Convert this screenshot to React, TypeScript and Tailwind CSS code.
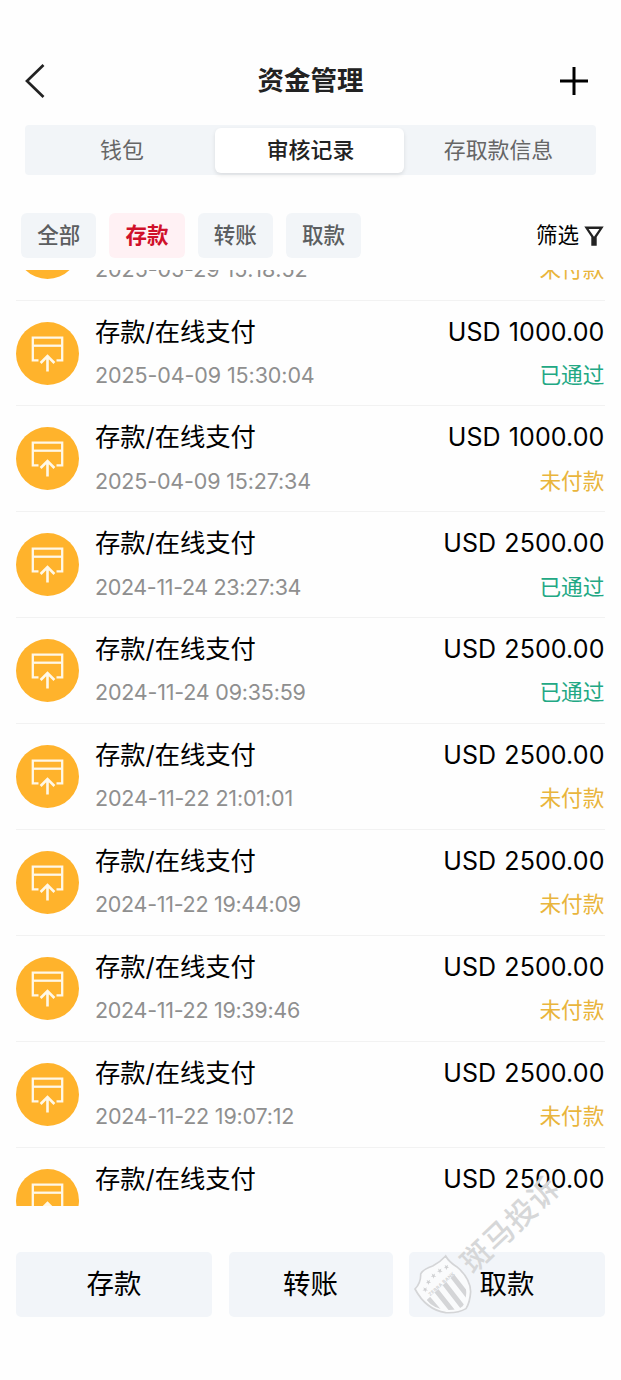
import React from 'react';

type Status = 'paid' | 'unpaid';
interface Entry { date: string; amount: string; status: Status; track: string }

const entries: Entry[] = [
  { date: '2025-05-29 15:18:52', amount: 'USD 1000.00', status: 'unpaid', track: 'tracking-[-0.05px]' },
  { date: '2025-04-09 15:30:04', amount: 'USD 1000.00', status: 'paid', track: 'tracking-[-0.1px]' },
  { date: '2025-04-09 15:27:34', amount: 'USD 1000.00', status: 'unpaid', track: 'tracking-[-0.16px]' },
  { date: '2024-11-24 23:27:34', amount: 'USD 2500.00', status: 'paid', track: 'tracking-[-0.37px]' },
  { date: '2024-11-24 09:35:59', amount: 'USD 2500.00', status: 'paid', track: 'tracking-[-0.21px]' },
  { date: '2024-11-22 21:01:01', amount: 'USD 2500.00', status: 'unpaid', track: 'tracking-[-0.16px]' },
  { date: '2024-11-22 19:44:09', amount: 'USD 2500.00', status: 'unpaid', track: 'tracking-[-0.29px]' },
  { date: '2024-11-22 19:39:46', amount: 'USD 2500.00', status: 'unpaid', track: 'tracking-[-0.29px]' },
  { date: '2024-11-22 19:07:12', amount: 'USD 2500.00', status: 'unpaid', track: 'tracking-[-0.21px]' },
  { date: '2024-11-22 18:52:30', amount: 'USD 2500.00', status: 'unpaid', track: 'tracking-[-0.29px]' },
];

function DepositIcon() {
  return (
    <svg viewBox="0 0 63 63" className="mt-[21px] size-[63px] shrink-0" fill="none">
      <circle cx="31.5" cy="31.5" r="31.5" fill="#ffb32c" />
      <g stroke="#fff8e8" strokeWidth="2.3">
        <path d="M22.500 38.300H16.800V15.700h29.400v22.600H40.500" />
        <path d="M16.800 23.700h29.400" />
        <path d="M31.500 49.500V34M24.600 41l6.900-7 6.900 7" strokeWidth="2.6" />
      </g>
    </svg>
  );
}

function Row({ entry }: { entry: Entry }) {
  return (
    <li className="flex h-[105.9px] shrink-0 gap-4 border-b border-[#f2f2f2] pr-[0.5px]">
      <DepositIcon />
      <div className="flex grow justify-between pt-[13px]">
        <div>
          <p className="text-[25.3px] leading-[36px] text-black">存款/在线支付</p>
          <p className={`mt-[9.2px] text-[21.5px] leading-[32px] text-[#8f8f8f] ${entry.track}`}>{entry.date}</p>
        </div>
        <div className="text-right">
          <p className="text-[25px] leading-[36px] tracking-[0.1px] text-black [word-spacing:1px]">{entry.amount}</p>
          {entry.status === 'paid' ? (
            <p className="mt-[9.2px] text-[21.7px] leading-[32px] text-[#22a884]">已通过</p>
          ) : (
            <p className="mt-[9.2px] text-[21.7px] leading-[32px] text-[#e9b53c]">未付款</p>
          )}
        </div>
      </div>
    </li>
  );
}

const stars: [number, number][] = [[45, 118], [55, 96], [70, 77], [89, 62], [109, 51]];

function Watermark() {
  return (
    <svg viewBox="0 0 160 160" className="pointer-events-none absolute top-[1170px] left-[410px] size-[160px]" fill="none">
      <defs>
        <clipPath id="shieldField">
          <path d="M50 150L138 69Q171 101 169 130Q166 160 158 169Q142 182 108 180Q68 174 50 150Z" />
        </clipPath>
      </defs>
      <g transform="translate(0 80) scale(.3333)">
        <path d="M107 18Q117 36 140 50Q181 84 182 125Q180 157 168 176Q145 190 107 188Q48 179 15 117Q33 98 32 72Q38 58 68 48Q91 36 107 18Z" fill="#fafbfc" stroke="#d4d5d7" strokeWidth="5" />
        <g clipPath="url(#shieldField)" stroke="#d4d5d7" strokeWidth="15">
          <path d="M48 138L98 196M74 116L138 196M98 94L168 184M122 72L186 154" />
        </g>
        <text x="94" y="101" transform="rotate(-42 94 101)" textAnchor="middle" dominantBaseline="central" fontSize="14" fontWeight="700" letterSpacing="1" fill="#d4d5d7">ZEBRA BANK</text>
        {stars.map(([x, y]) => (
          <path key={x} transform={`translate(${x} ${y}) rotate(-38)`} d="M0-8L2-2 8-2 3 2 5 8 0 4-5 8-3 2-8-2-2-2Z" fill="#cfd0d2" />
        ))}
      </g>
      <text x="100" y="54.500" transform="rotate(-43.5 100 54.5)" textAnchor="middle" dominantBaseline="central" fontSize="30" letterSpacing="0.7" fontWeight="500" fill="#d6d7d8">斑马投诉</text>
    </svg>
  );
}

export default function App() {
  return (
    <main className="relative h-[1380px] w-[621px] overflow-hidden bg-[#fefefe] font-['Inter','Noto_Sans_CJK_SC',sans-serif]">
      <header className="flex h-[125px] items-start justify-between pt-[60px] pr-[33.5px] pl-[25px]">
        <svg viewBox="0 0 20 34" className="mt-[4px] h-[34px] w-[20px]" fill="none" stroke="#222" strokeWidth="2.7">
          <path d="M18.500 1L2 17l16.500 16" />
        </svg>
        <h1 className="ml-[16.5px] text-[26.5px] leading-[40px] font-bold text-[#222]">资金管理</h1>
        <svg viewBox="0 0 28 28" className="mt-[7px] size-[28px]" stroke="#000" strokeWidth="3">
          <path d="M0 14h28M14 0v28" />
        </svg>
      </header>
      <nav className="mx-[25px] flex h-[50px] rounded-[4px] bg-[#f2f5f8] py-[2.500px] text-[21.900px] text-[#666]">
        <span className="flex w-[190px] items-center justify-center pl-[4px]">钱包</span>
        <span className="flex w-[189px] items-center justify-center rounded-[6px] bg-white pl-[2px] font-medium text-[#222] shadow-[0_2px_4px_rgba(0,0,0,0.1)]">审核记录</span>
        <span className="flex grow items-center justify-center pr-[3px]">存取款信息</span>
      </nav>
      <div className="mt-[38px] flex h-[45px] items-center justify-between pr-[17px] pl-[21px]">
        <div className="flex gap-[13px] text-[21.5px] font-medium text-[#5c5e60]">
          <span className="flex h-[45px] w-[75.300px] items-center justify-center rounded-[6px] bg-[#f2f5f8] pb-px">全部</span>
          <span className="flex h-[45px] w-[75.300px] items-center justify-center rounded-[6px] bg-[#fff1f4] pb-px font-bold text-[#d0112b]">存款</span>
          <span className="flex h-[45px] w-[75.300px] items-center justify-center rounded-[6px] bg-[#f2f5f8] pb-px">转账</span>
          <span className="flex h-[45px] w-[75.300px] items-center justify-center rounded-[6px] bg-[#f2f5f8] pb-px">取款</span>
        </div>
        <div className="flex items-center gap-[5px] text-[21.5px] text-black">
          <span>筛选</span>
          <svg viewBox="0 0 20 20" className="size-[20px]">
            <path d="M0.300 0.500h19.400L12.700 11V19.800H7.300V11ZM4.600 3l5.400 7.800L15.400 3Z" fill="#222" fillRule="evenodd" />
          </svg>
        </div>
      </div>
      <section className="mt-[12px] h-[936px] overflow-hidden px-4">
        <ul className="-mt-[75.300px] flex flex-col">
          {entries.map((entry) => <Row key={entry.date} entry={entry} />)}
        </ul>
      </section>
      <footer className="mt-[46px] flex h-[65px] gap-[16.500px] px-4 text-[27.500px] text-black">
        <button className="w-[196px] rounded-[5px] bg-[#f2f5f9]">存款</button>
        <button className="w-[164px] rounded-[5px] bg-[#f2f5f9]">转账</button>
        <button className="w-[196px] rounded-[5px] bg-[#f2f5f9]">取款</button>
      </footer>
      <Watermark />
    </main>
  );
}
